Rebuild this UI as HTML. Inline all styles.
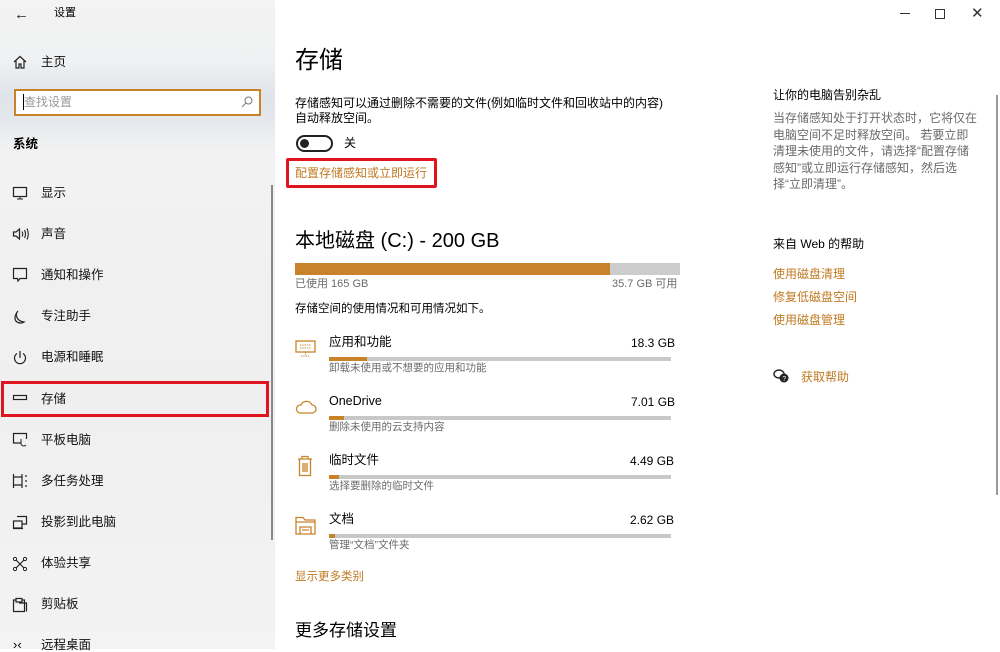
<!DOCTYPE html>
<html><head><meta charset="utf-8"><style>
*{margin:0;padding:0;box-sizing:border-box}
body{width:1000px;height:649px;overflow:hidden;background:#fff;font-family:"Liberation Sans","Noto Sans CJK SC",sans-serif;color:#000;position:relative;font-size:12px}
.a{position:absolute;white-space:nowrap;line-height:1}
#side{position:absolute;left:0;top:0;width:275px;height:649px;background:linear-gradient(180deg,#f3f3f3 0,#f0f1f2 60px,#dfe4ea 95px,#e4e8ec 120px,#f2f2f2 150px,#efefef 400px,#f3f3f3 649px)}
.si{position:absolute;left:41px;font-size:12.5px;line-height:1;color:#111}
.ic{position:absolute;left:12px}
.or{color:#c07a22}
.gr{color:#6b6b6b}
.bar{position:absolute;height:4px;background:#c8c8c8}
.bar i{display:block;height:4px;background:#c8832a}
</style></head><body>
<div id="side">
<div class="a" style="left:14px;top:7px;font-size:15px;color:#222">←</div>
<div class="a" style="left:54px;top:8px;font-size:11px">设置</div>
<svg class="ic" style="top:55px" width="16" height="14" viewBox="0 0 16 14"><path d="M2 7L8 1.5 14 7M4 5.5V13H7V9H9V13H12V5.5" fill="none" stroke="#222" stroke-width="1.2"/></svg>
<div class="si" style="top:56px">主页</div>
<div style="position:absolute;left:14px;top:89px;width:247px;height:27px;background:#fff;border:2px solid #c8832a"></div>
<div class="a" style="left:24px;top:96px;font-size:12px;color:#999">查找设置</div>
<div class="a" style="left:23px;top:94px;width:1px;height:16px;background:#000"></div>
<svg style="position:absolute;left:241px;top:96px" width="12" height="12"><circle cx="7.5" cy="4.5" r="3.5" fill="none" stroke="#777"/><path d="M5 7L1 11" stroke="#777"/></svg>
<div class="a" style="left:13px;top:138px;font-size:12.5px;font-weight:bold">系统</div>
<svg class="ic" style="top:186px" width="16" height="14"><rect x="1.5" y="1.5" width="13" height="9" fill="none" stroke="#222" stroke-width="1.2"/><path d="M8 11v2M5 13h6" stroke="#222"/></svg>
<div class="si" style="top:187px">显示</div>
<svg class="ic" style="top:227px" width="18" height="14"><path d="M1.5 5H4L7.5 2V12L4 9H1.5Z" fill="none" stroke="#222" stroke-width="1.2"/><path d="M10 4.5Q11.5 7 10 9.5M12.5 3Q14.5 7 12.5 11M15 1.5Q17.5 7 15 12.5" fill="none" stroke="#222" stroke-width="1.1"/></svg>
<div class="si" style="top:228px">声音</div>
<svg class="ic" style="top:267px" width="16" height="16"><path d="M1.5 1.5H14.5V11.5H8L6 14 5.5 11.5H1.5Z" fill="none" stroke="#222" stroke-width="1.2"/></svg>
<div class="si" style="top:269px">通知和操作</div>
<svg class="ic" style="top:309px" width="16" height="16"><path d="M6 2C3 5 4 12 12 13 9 15 3 14 3 9 3 6 5 3 6 2Z" fill="none" stroke="#222" stroke-width="1.2"/></svg>
<div class="si" style="top:310px">专注助手</div>
<svg class="ic" style="top:350px" width="16" height="16"><path d="M5 3.5A5.5 5.5 0 1 0 11 3.5M8 1V8" fill="none" stroke="#222" stroke-width="1.2"/></svg>
<div class="si" style="top:351px">电源和睡眠</div>
<div style="position:absolute;left:1px;top:381px;width:268px;height:36px;border:3px solid #e0141e"></div>
<svg class="ic" style="top:394px" width="16" height="8"><rect x="1.5" y="1.5" width="13" height="4" fill="none" stroke="#222" stroke-width="1.2"/></svg>
<div class="si" style="top:393px">存储</div>
<svg class="ic" style="top:432px" width="16" height="16"><path d="M9 11H1.5V1.5H14.5V7" fill="none" stroke="#222" stroke-width="1.2"/><path d="M9 7v5a3 3 0 0 0 5 1" fill="none" stroke="#222"/></svg>
<div class="si" style="top:434px">平板电脑</div>
<svg class="ic" style="top:473px" width="16" height="16"><path d="M1.5 1v14M10 1v14M1.5 4H10M1.5 12H10M14 2v2M14 7v2M14 12v2" fill="none" stroke="#222" stroke-width="1.2"/></svg>
<div class="si" style="top:475px">多任务处理</div>
<svg class="ic" style="top:515px" width="16" height="16"><path d="M5 1.5H14.5V9H10M1.5 6H10V13H1.5ZM1 13.5H11" fill="none" stroke="#222" stroke-width="1.2"/></svg>
<div class="si" style="top:516px">投影到此电脑</div>
<svg class="ic" style="top:556px" width="16" height="16"><path d="M3 3L13 13M13 3L3 13" stroke="#222" stroke-width="1.2"/><circle cx="3" cy="3" r="1.6" fill="#fff" stroke="#222"/><circle cx="13" cy="3" r="1.6" fill="#fff" stroke="#222"/><circle cx="3" cy="13" r="1.6" fill="#fff" stroke="#222"/><circle cx="13" cy="13" r="1.6" fill="#fff" stroke="#222"/></svg>
<div class="si" style="top:557px">体验共享</div>
<svg class="ic" style="top:597px" width="16" height="16"><path d="M4 3H1.5V14.5H12.5V3H10M4 1.5H10V5H4ZM7 6H14.5V14.5" fill="none" stroke="#222" stroke-width="1.2"/></svg>
<div class="si" style="top:598px">剪贴板</div>
<div class="a" style="left:13px;top:638px;font-size:13px">›‹</div>
<div class="si" style="top:639px">远程桌面</div>
<div style="position:absolute;left:271px;top:185px;width:2px;height:355px;background:#888"></div>
</div>

<div class="a" style="left:900px;top:13px;width:10px;height:1px;background:#333"></div>
<div class="a" style="left:935px;top:9px;width:10px;height:10px;border:1px solid #333"></div>
<div class="a" style="left:971px;top:6px;font-size:15px;color:#333">✕</div>

<div class="a" style="left:295px;top:49px;font-size:24px">存储</div>
<div class="a" style="left:295px;top:96px;line-height:15px;font-size:12px">存储感知可以通过删除不需要的文件(例如临时文件和回收站中的内容)<br>自动释放空间。</div>
<div style="position:absolute;left:296px;top:135px;width:37px;height:17px;border:2px solid #222;border-radius:9px"></div>
<div style="position:absolute;left:300px;top:139px;width:9px;height:9px;border-radius:50%;background:#222"></div>
<div class="a" style="left:344px;top:137px;font-size:12px">关</div>
<div style="position:absolute;left:286px;top:158px;width:151px;height:30px;border:3px solid #e0141e;border-radius:2px"></div>
<div class="a or" style="left:295px;top:167px;font-size:12px">配置存储感知或立即运行</div>

<div class="a" style="left:295px;top:231px;font-size:20px">本地磁盘 (C:) - 200 GB</div>
<div style="position:absolute;left:295px;top:263px;width:385px;height:12px;background:#ccc"><div style="width:315px;height:12px;background:#c8832a"></div></div>
<div class="a gr" style="left:295px;top:279px;font-size:11px">已使用 165 GB</div>
<div class="a gr" style="left:612px;top:279px;font-size:11px">35.7 GB 可用</div>
<div class="a" style="left:295px;top:304px;font-size:11.5px">存储空间的使用情况和可用情况如下。</div>

<svg style="position:absolute;left:295px;top:340px" width="22" height="18"><rect x="1" y="1" width="19" height="11" fill="none" stroke="#c8832a" stroke-width="1.3"/><path d="M5 5h11M5 8h11M10.5 12v3M6 16h9" stroke="#c8832a" stroke-dasharray="1.3 1" /></svg>
<div class="a" style="left:329px;top:336px;font-size:12.5px">应用和功能</div>
<div class="a" style="left:631px;top:337px;font-size:12px">18.3 GB</div>
<div class="bar" style="left:329px;top:357px;width:342px"><i style="width:38px"></i></div>
<div class="a gr" style="left:329px;top:363px;font-size:10.5px">卸载未使用或不想要的应用和功能</div>

<svg style="position:absolute;left:295px;top:399px" width="22" height="16"><path d="M5 14H17A4 4 0 0 0 17 6 6 6 0 0 0 6 6 4 4 0 0 0 5 14Z" fill="none" stroke="#c8832a" stroke-width="1.3"/></svg>
<div class="a" style="left:329px;top:395px;font-size:12.5px">OneDrive</div>
<div class="a" style="left:631px;top:396px;font-size:12px">7.01 GB</div>
<div class="bar" style="left:329px;top:416px;width:342px"><i style="width:15px"></i></div>
<div class="a gr" style="left:329px;top:422px;font-size:10.5px">删除未使用的云支持内容</div>

<svg style="position:absolute;left:296px;top:455px" width="18" height="22"><path d="M2 4H16M6 4V1.5H12V4M3.5 4V20.5H14.5V4M7 8v9M9 8v9M11 8v9" fill="none" stroke="#c8832a" stroke-width="1.3"/></svg>
<div class="a" style="left:329px;top:454px;font-size:12.5px">临时文件</div>
<div class="a" style="left:630px;top:455px;font-size:12px">4.49 GB</div>
<div class="bar" style="left:329px;top:475px;width:342px"><i style="width:10px"></i></div>
<div class="a gr" style="left:329px;top:481px;font-size:10.5px">选择要删除的临时文件</div>

<svg style="position:absolute;left:295px;top:516px" width="22" height="20"><path d="M1 18V1.5H8L10 4H20V18ZM1 6H20M5 18V11H16V18M7 14H14" fill="none" stroke="#c8832a" stroke-width="1.3"/></svg>
<div class="a" style="left:329px;top:513px;font-size:12.5px">文档</div>
<div class="a" style="left:630px;top:514px;font-size:12px">2.62 GB</div>
<div class="bar" style="left:329px;top:534px;width:342px"><i style="width:6px"></i></div>
<div class="a gr" style="left:329px;top:540px;font-size:10.5px">管理“文档”文件夹</div>

<div class="a or" style="left:295px;top:572px;font-size:11.5px">显示更多类别</div>
<div class="a" style="left:295px;top:622px;font-size:17px">更多存储设置</div>

<div class="a" style="left:773px;top:89px;font-size:12px">让你的电脑告别杂乱</div>
<div class="a gr" style="left:773px;top:110px;font-size:12px;line-height:16.5px">当存储感知处于打开状态时，它将仅在<br>电脑空间不足时释放空间。 若要立即<br>清理未使用的文件，请选择“配置存储<br>感知”或立即运行存储感知，然后选<br>择“立即清理”。</div>
<div class="a" style="left:773px;top:238px;font-size:12px">来自 Web 的帮助</div>
<div class="a or" style="left:773px;top:268px;font-size:12px">使用磁盘清理</div>
<div class="a or" style="left:773px;top:291px;font-size:12px">修复低磁盘空间</div>
<div class="a or" style="left:773px;top:314px;font-size:12px">使用磁盘管理</div>
<svg style="position:absolute;left:773px;top:369px" width="16" height="14"><ellipse cx="6" cy="5" rx="5" ry="4" fill="none" stroke="#222" stroke-width="1.4"/><circle cx="11" cy="9" r="4.5" fill="#222"/><text x="9.3" y="12" font-size="7" fill="#fff" font-family="Liberation Sans">?</text></svg>
<div class="a or" style="left:801px;top:371px;font-size:12px">获取帮助</div>
<div style="position:absolute;left:996px;top:95px;width:2px;height:400px;background:#999"></div>
</body></html>
